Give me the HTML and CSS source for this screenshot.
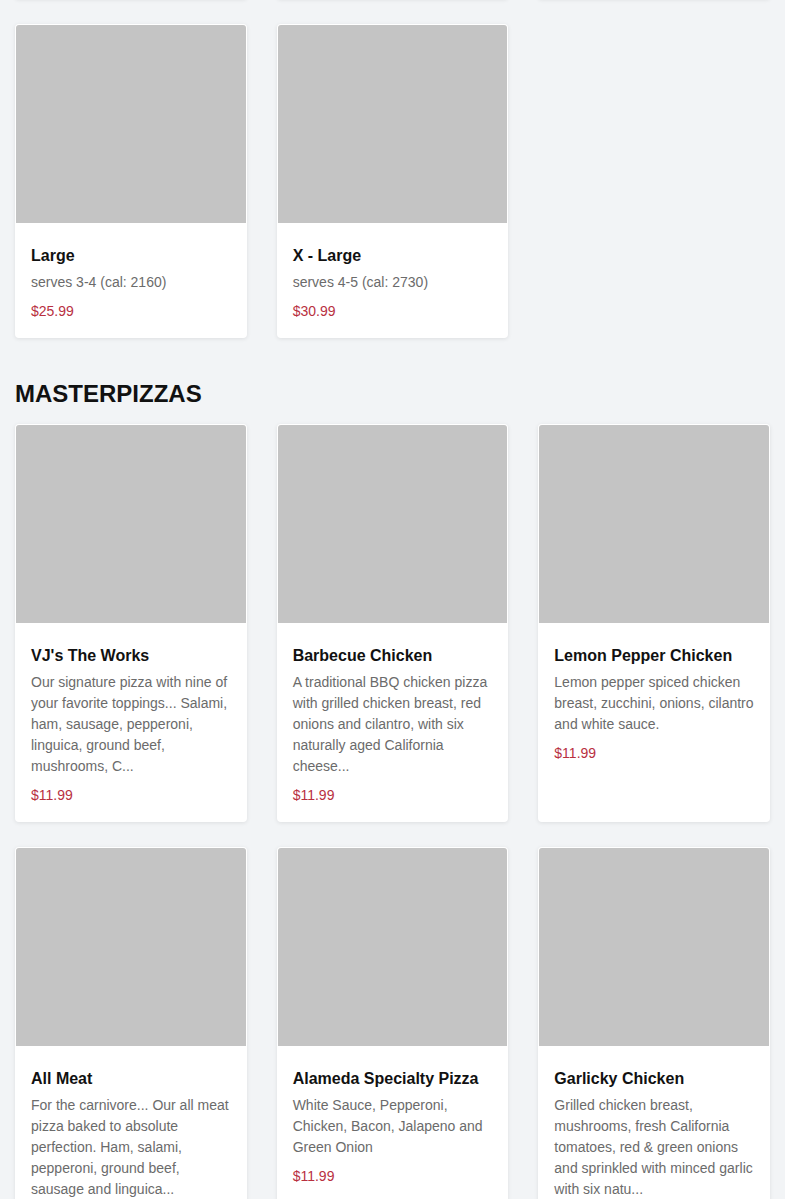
FILE: index.html
```html
<!DOCTYPE html>
<html lang="en">
<head>
<meta charset="utf-8">
<title>Menu</title>
<link rel="stylesheet" href="styles.css">
</head>
<body>
<main class="menu">
  <section class="section section-first">
    <div class="grid">
      <article class="card">
        <div class="card-img"></div>
        <div class="card-body">
          <h3 class="card-title">Small</h3>
          <p class="card-desc">serves 1-2 (cal: 1100)</p>
          <p class="card-price">$15.99</p>
        </div>
      </article>
      <article class="card">
        <div class="card-img"></div>
        <div class="card-body">
          <h3 class="card-title">Medium</h3>
          <p class="card-desc">serves 2-3 (cal: 1600)</p>
          <p class="card-price">$20.99</p>
        </div>
      </article>
      <article class="card">
        <div class="card-img"></div>
        <div class="card-body">
          <h3 class="card-title">Personal</h3>
          <p class="card-desc">serves 1 (cal: 800)</p>
          <p class="card-price">$10.99</p>
        </div>
      </article>
      <article class="card">
        <div class="card-img"></div>
        <div class="card-body">
          <h3 class="card-title">Large</h3>
          <p class="card-desc">serves 3-4 (cal: 2160)</p>
          <p class="card-price">$25.99</p>
        </div>
      </article>
      <article class="card">
        <div class="card-img"></div>
        <div class="card-body">
          <h3 class="card-title">X - Large</h3>
          <p class="card-desc">serves 4-5 (cal: 2730)</p>
          <p class="card-price">$30.99</p>
        </div>
      </article>
    </div>
  </section>

  <section class="section">
    <h2 class="section-title">MASTERPIZZAS</h2>
    <div class="grid">
      <article class="card">
        <div class="card-img"></div>
        <div class="card-body">
          <h3 class="card-title">VJ's The Works</h3>
          <p class="card-desc">Our signature pizza with nine of your favorite toppings... Salami, ham, sausage, pepperoni, linguica, ground beef, mushrooms, C...</p>
          <p class="card-price">$11.99</p>
        </div>
      </article>
      <article class="card">
        <div class="card-img"></div>
        <div class="card-body">
          <h3 class="card-title">Barbecue Chicken</h3>
          <p class="card-desc">A traditional BBQ chicken pizza with grilled chicken breast, red onions and cilantro, with six naturally aged California cheese...</p>
          <p class="card-price">$11.99</p>
        </div>
      </article>
      <article class="card">
        <div class="card-img"></div>
        <div class="card-body">
          <h3 class="card-title">Lemon Pepper Chicken</h3>
          <p class="card-desc">Lemon pepper spiced chicken breast, zucchini, onions, cilantro and white sauce.</p>
          <p class="card-price">$11.99</p>
        </div>
      </article>
      <article class="card">
        <div class="card-img"></div>
        <div class="card-body">
          <h3 class="card-title">All Meat</h3>
          <p class="card-desc">For the carnivore... Our all meat pizza baked to absolute perfection. Ham, salami, pepperoni, ground beef, sausage and linguica...</p>
          <p class="card-price">$11.99</p>
        </div>
      </article>
      <article class="card">
        <div class="card-img"></div>
        <div class="card-body">
          <h3 class="card-title">Alameda Specialty Pizza</h3>
          <p class="card-desc">White Sauce, Pepperoni, Chicken, Bacon, Jalapeno and Green Onion</p>
          <p class="card-price">$11.99</p>
        </div>
      </article>
      <article class="card">
        <div class="card-img"></div>
        <div class="card-body">
          <h3 class="card-title">Garlicky Chicken</h3>
          <p class="card-desc">Grilled chicken breast, mushrooms, fresh California tomatoes, red &amp; green onions and sprinkled with minced garlic with six natu...</p>
          <p class="card-price">$11.99</p>
        </div>
      </article>
    </div>
  </section>
</main>
</body>
</html>
```

FILE: styles.css
```css
* {
  box-sizing: border-box;
}

html, body {
  margin: 0;
  padding: 0;
}

body {
  background: #f2f4f6;
  font-family: "Liberation Sans", Arial, Helvetica, sans-serif;
  color: #111;
  overflow: hidden;
}

.menu {
  padding: 0 15px;
}

.section-first {
  margin-top: -315px;
}

.section-title {
  margin: 42px 0 16px;
  font-size: 24px;
  line-height: 28px;
  font-weight: 700;
  color: #111;
}

.grid {
  display: grid;
  grid-template-columns: repeat(3, 1fr);
  column-gap: 30px;
  row-gap: 25px;
}

.card {
  background: #fff;
  border-radius: 4px;
  padding: 1px;
  box-shadow: 0 1px 4px rgba(0, 0, 0, 0.09);
  display: flex;
  flex-direction: column;
}

.card-img {
  height: 198px;
  background: #c4c4c4;
  border-radius: 3px 3px 0 0;
}

.card-body {
  padding: 23px 15px 15px;
  display: flex;
  flex-direction: column;
}

.card-title {
  margin: 0 0 6px;
  font-size: 16px;
  line-height: 20px;
  font-weight: 700;
  color: #111;
}

.card-desc {
  margin: 0 0 8px;
  font-size: 14px;
  line-height: 21px;
  color: #6b6b6b;
}

.card-price {
  margin: 0;
  font-size: 14px;
  line-height: 21px;
  color: #b8303f;
}
```
